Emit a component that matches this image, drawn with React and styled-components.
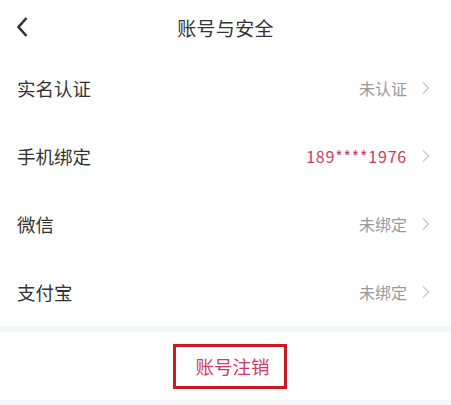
import React from "react";
import styled, { createGlobalStyle } from "styled-components";

const GlobalStyle = createGlobalStyle`
  html, body {
    margin: 0;
    padding: 0;
    background: #f5f6f8;
  }
  body {
    font-family: "Noto Sans CJK SC", "Noto Sans", sans-serif;
  }
`;

const Page = styled.div`
  width: 451px;
  display: flex;
  flex-direction: column;
  background: #f5f6f8;
`;

const Header = styled.div`
  height: 54px;
  display: flex;
  align-items: center;
  justify-content: center;
  position: relative;
  background: #fff;
`;

const BackButton = styled.div`
  position: absolute;
  left: 14px;
  top: 16px;
  width: 16px;
  height: 22px;
  display: flex;
  align-items: center;
  justify-content: center;
`;

const Title = styled.div`
  font-size: 19px;
  color: #333;
  letter-spacing: 0.3px;
`;

const List = styled.div`
  display: flex;
  flex-direction: column;
  background: #fff;
`;

const Row = styled.div`
  height: 68px;
  display: flex;
  align-items: center;
  padding: 0 20px 0 17px;
`;

const Label = styled.div`
  flex: 1;
  font-size: 18.5px;
  color: #333;
`;

const Value = styled.div`
  font-size: 16px;
  color: ${(p) => (p.$accent ? "#c93a60" : "#999")};
  letter-spacing: ${(p) => (p.$accent ? "0.8px" : "0")};
  margin-right: 14px;
`;

const Footer = styled.div`
  margin-top: 6px;
  height: 68px;
  display: flex;
  align-items: center;
  justify-content: center;
  background: #fff;
`;

const CancelButton = styled.div`
  box-sizing: border-box;
  height: 45px;
  width: 114px;
  margin-left: 8px;
  border: 3px solid #cc1a22;
  display: flex;
  align-items: center;
  padding-left: 20px;
  font-size: 18.5px;
  color: #d03a60;
`;

const BottomBand = styled.div`
  height: 5px;
  background: #f5f6f8;
`;

const Chevron = () => (
  <svg width="10" height="14" viewBox="0 0 10 14">
    <path d="M2 1.5 L7.5 7 L2 12.5" fill="none" stroke="#cdcdcd" strokeWidth="1.6" />
  </svg>
);

const BackIcon = () => (
  <svg width="14" height="22" viewBox="0 0 14 22">
    <path d="M11.5 2 L3.5 11 L11.5 20" fill="none" stroke="#333" strokeWidth="2.6" strokeLinejoin="miter" />
  </svg>
);

const rows = [
  { label: "实名认证", value: "未认证" },
  { label: "手机绑定", value: "189****1976", accent: true },
  { label: "微信", value: "未绑定" },
  { label: "支付宝", value: "未绑定" },
];

export default function App() {
  return (
    <Page>
      <GlobalStyle />
      <Header>
        <BackButton>
          <BackIcon />
        </BackButton>
        <Title>账号与安全</Title>
      </Header>
      <List>
        {rows.map((r) => (
          <Row key={r.label}>
            <Label>{r.label}</Label>
            <Value $accent={r.accent}>{r.value}</Value>
            <Chevron />
          </Row>
        ))}
      </List>
      <Footer>
        <CancelButton>账号注销</CancelButton>
      </Footer>
      <BottomBand />
    </Page>
  );
}
